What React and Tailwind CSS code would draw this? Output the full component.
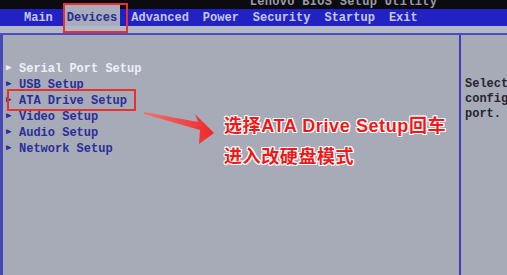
import React from 'react';

const TABS = ['Main', 'Devices', 'Advanced', 'Power', 'Security', 'Startup', 'Exit'];
const ITEMS = ['Serial Port Setup', 'USB Setup', 'ATA Drive Setup', 'Video Setup', 'Audio Setup', 'Network Setup'];

const mono = { fontFamily: '"Liberation Mono", "DejaVu Sans Mono", monospace' };

const App = () => {
    return (
        <div className="relative w-[507px] h-[275px] overflow-hidden bg-[#a7abb7] text-[12px] leading-none" style={mono}>
            {/* title strip */}
            <div className="h-[9px] bg-[#0c0c10] flex justify-center overflow-hidden">
                <span className="ml-[180px] -mt-[4px] text-[#9a9aa4] font-bold tracking-[0.3px]">Lenovo BIOS Setup Utility</span>
            </div>

            {/* menu bar */}
            <div className="h-[17px] bg-[#2222c4] flex items-center pl-[24px] gap-[14px] font-bold text-[#c4c8e8]">
                {TABS.map((t) => (
                    <span
                        key={t}
                        className={t === 'Devices' ? 'bg-[#a8acbc] text-[#2a2e90] px-[3px] -mx-[3px] h-[22px] -mt-[5px] pt-[8px]' : ''}
                    >
                        {t}
                    </span>
                ))}
            </div>

            <div className="h-[7px] bg-[#b4b8c6]" />
            <div className="h-[2px] bg-[#4a4ec4]" />

            <div className="flex h-[240px]">
                <div className="w-[3px] bg-[#4448b8]" />
                <div className="w-[456px] pt-[28px] pl-[3px] flex flex-col gap-[3.4px] font-bold">
                    {ITEMS.map((item, i) => (
                        <div key={item} className={i === 0 ? 'text-[#eef0f8] h-[12.6px]' : 'text-[#2a2e98] h-[12.6px]'}>
                            <span className="inline-block w-[13px] text-[9px] align-middle">▶</span>
                            <span>{item}</span>
                        </div>
                    ))}
                </div>
                <div className="w-[2px] bg-[#3a3ec0]" />
                <div className="flex-1 pl-[4px] pt-[42px] text-[#262630] font-bold leading-[15px] overflow-hidden whitespace-nowrap">
                    <div>Select</div>
                    <div>configu</div>
                    <div>port.</div>
                </div>
            </div>

            {/* annotations */}
            <div className="absolute left-[63px] top-[3px] w-[65px] h-[30px] border-2 border-[#e83030]" />
            <div className="absolute left-[7px] top-[89px] w-[129px] h-[22px] border-2 border-[#e83030]" />

            <svg className="absolute left-0 top-0" width="507" height="275">
                <defs>
                    <linearGradient id="ar" x1="0" y1="0" x2="1" y2="0">
                        <stop offset="0" stopColor="#f07070" />
                        <stop offset="1" stopColor="#f02828" />
                    </linearGradient>
                </defs>
                <polygon points="144,112 198,122 195,114 214,133 199,144 200,130 144,114" fill="url(#ar)" />
            </svg>

            <div
                className="absolute left-[224px] top-[117px] flex flex-col gap-[12px] text-[#f01818] font-bold text-[18px] leading-[19px] tracking-[0.6px]"
                style={{
                    fontFamily: 'Arial, "Liberation Sans", "Noto Sans CJK SC", sans-serif',
                    textShadow: '1px 1px 0 #fff, -1px -1px 0 #fff, 1px -1px 0 #fff, -1px 1px 0 #fff, 0 1px 0 #fff, 0 -1px 0 #fff, 1px 0 0 #fff, -1px 0 0 #fff',
                }}
            >
                <div>选择ATA Drive Setup回车</div>
                <div>进入改硬盘模式</div>
            </div>
        </div>
    );
};

export default App;
